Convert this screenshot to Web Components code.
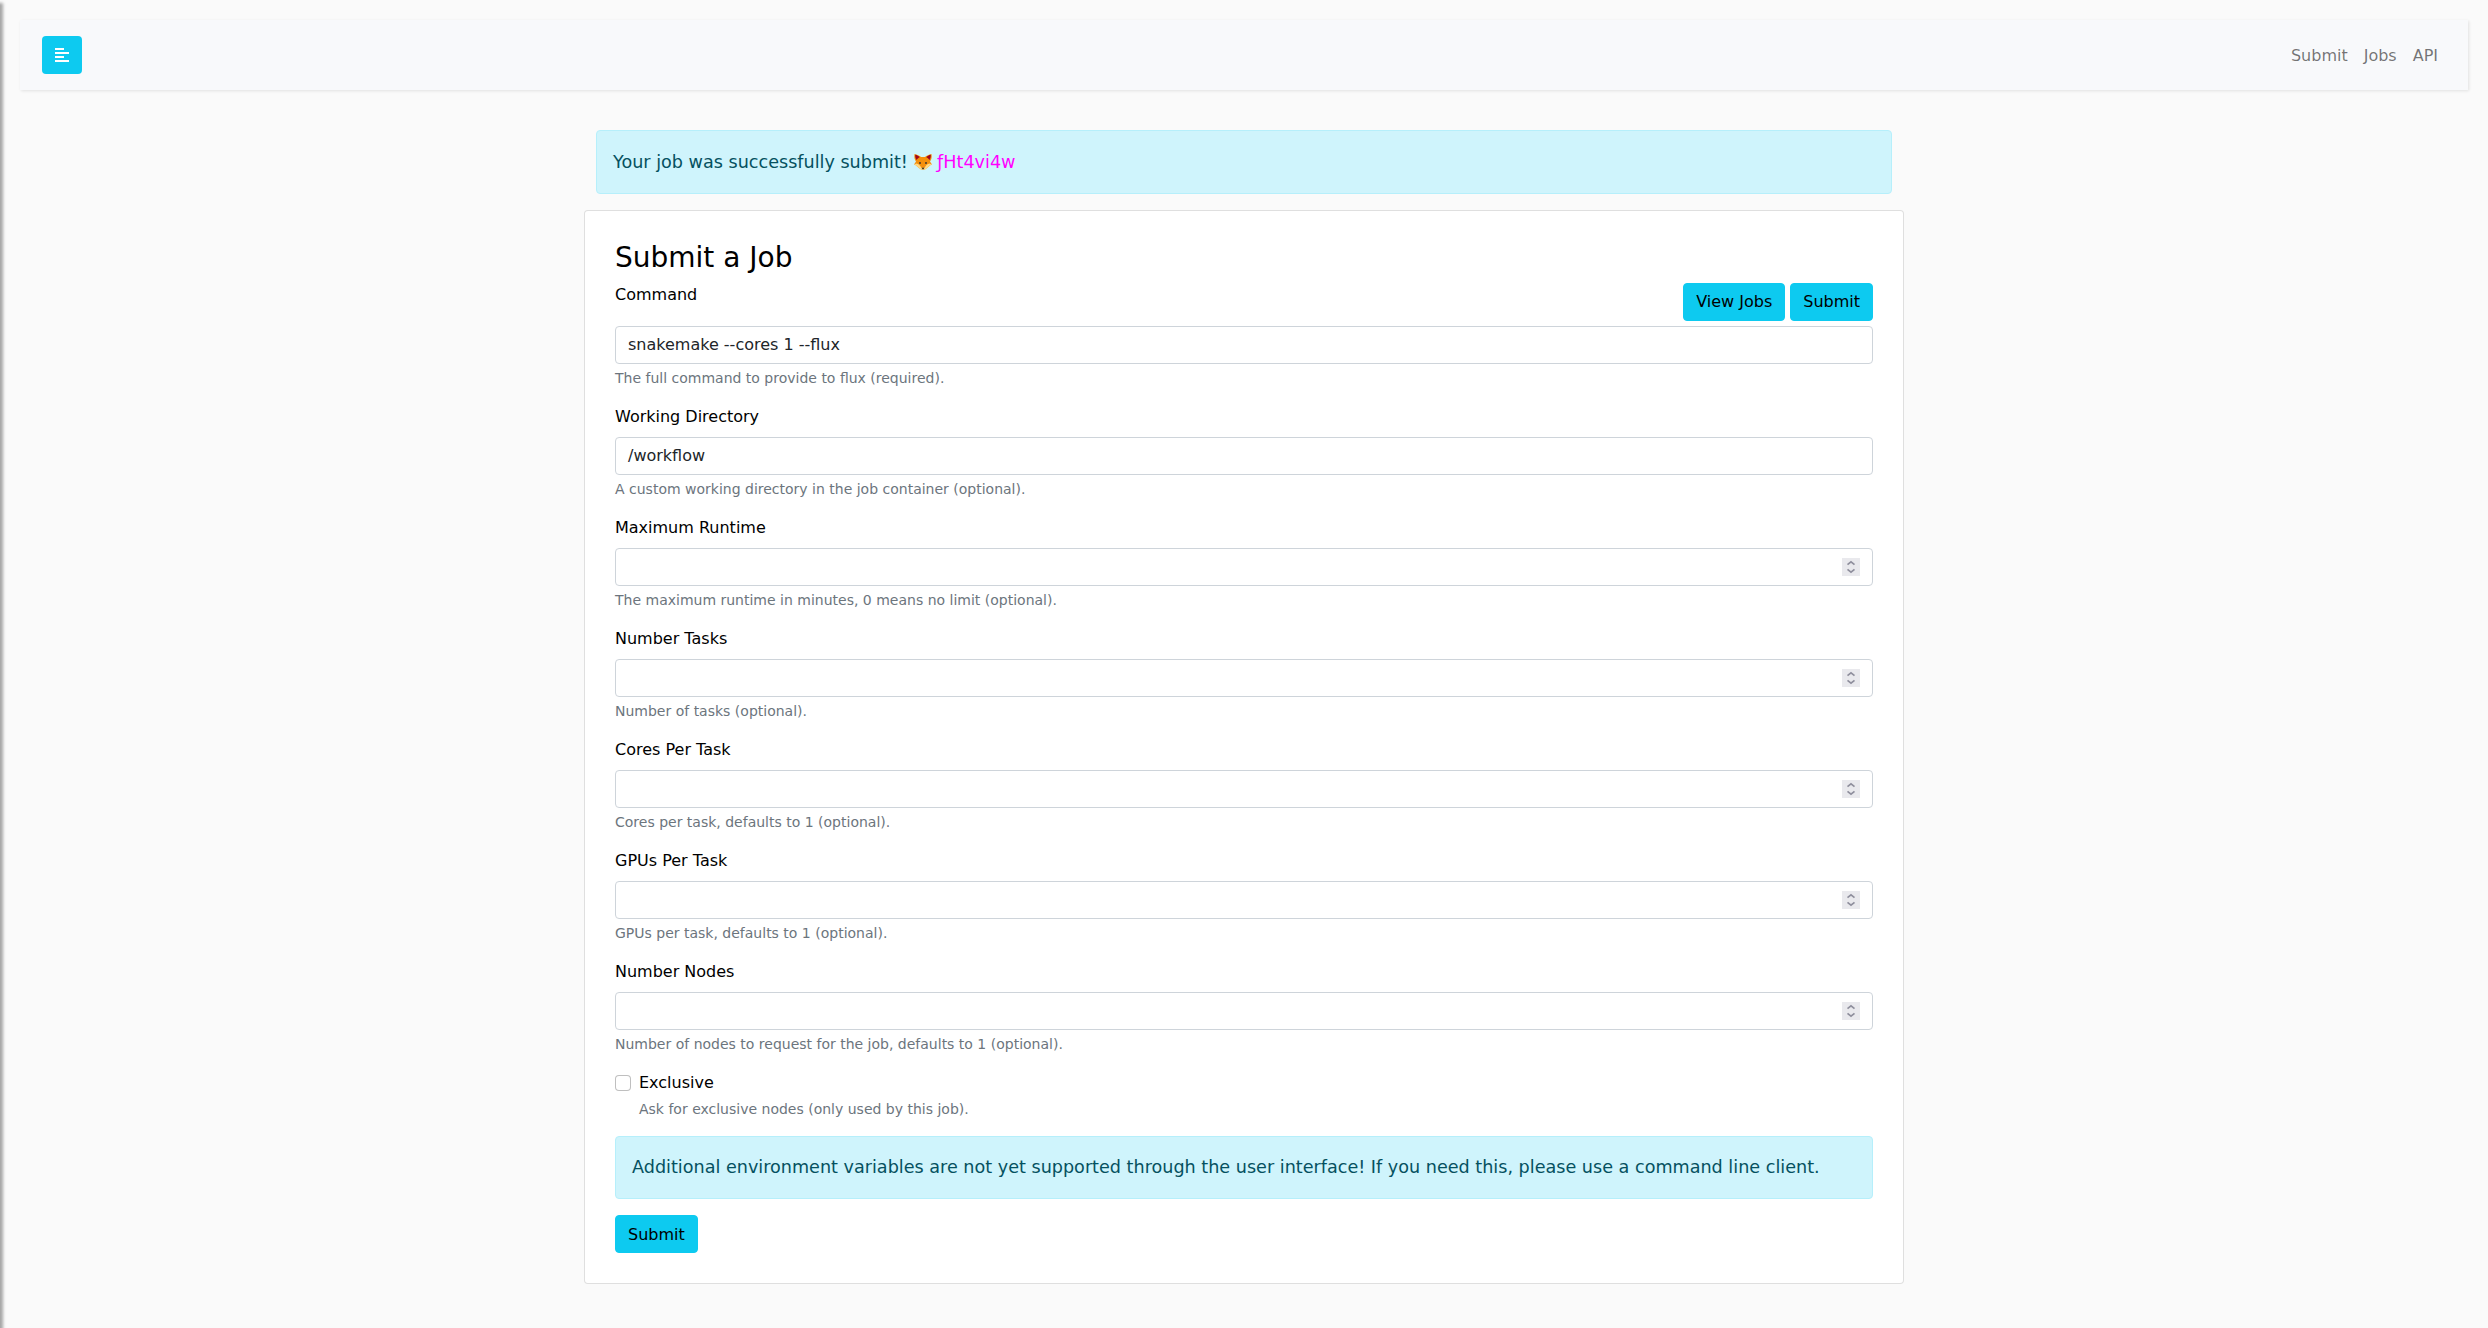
<!DOCTYPE html>
<html lang="en">
<head>
<meta charset="utf-8">
<title>Submit a Job</title>
<style>
body{margin:0;background:#fafafa;font:16px/1.5 "DejaVu Sans",sans-serif;color:#000;height:1328px;overflow:hidden}
</style>
</head>
<body>
<job-app></job-app>
<script>
const define=(name,html,setup)=>customElements.define(name,class extends HTMLElement{
  connectedCallback(){
    if(this.shadowRoot)return;
    const t=document.createElement('template');
    t.innerHTML='<style>*{box-sizing:border-box}</style>'+html;
    this.attachShadow({mode:'open'}).append(t.content.cloneNode(true));
    if(setup)setup(this,this.shadowRoot);
  }
});

define('ui-button',`<style>
:host{display:block}
button{display:block;font:inherit;line-height:24px;color:#000;background:#0dcaf0;border:1px solid #0dcaf0;border-radius:4px;padding:var(--pad,6px 12px);margin:0}
</style><button type="button"><slot></slot></button>`);

define('ui-alert',`<style>
:host{display:block;box-sizing:border-box;border:1px solid #b6effb;border-radius:4px;background:#cff4fc;color:#055160;padding:var(--pad,16px)}
p{margin:0;font-size:17.6px;line-height:1.7em;white-space:nowrap}
</style><p><slot></slot></p>`);

define('fox-icon',`<style>
:host{display:inline-block;width:18px;height:16px;vertical-align:-2px}
svg{display:block;width:100%;height:100%}
</style><svg viewBox="0 0 36 32" aria-hidden="true">
<path fill="#f4900c" d="M1 0C6 1 11 3 14 6H22C25 3 30 1 35 0C36 6 35 11 32 15L36 21C32 22 30 25 27 27C24 30 21 32 18 32C15 32 12 30 9 27C6 25 4 22 0 21L4 15C1 11 0 6 1 0Z"/>
<path fill="#a0041e" d="M2.500 1.500C6 2 9 4 11.500 6.500C8.500 8 6.500 10 5 12C3 9 2 5 2.500 1.500ZM33.500 1.500C30 2 27 4 24.500 6.500C27.500 8 29.500 10 31 12C33 9 34 5 33.500 1.500Z"/>
<path fill="#ffd983" d="M0 21L5 19C9 20 12 22 14.500 27L18 29L21.500 27C24 22 27 20 31 19L36 21C32 22 30 25 27 27C24 30 21 32 18 32C15 32 12 30 9 27C6 25 4 22 0 21Z"/>
<circle cx="12" cy="18" r="1.800" fill="#292f33"/><circle cx="24" cy="18" r="1.800" fill="#292f33"/>
<path fill="#292f33" d="M15 27.500H21L18 31.500Z"/></svg>`);

define('top-nav',`<style>
:host{display:block}
nav{display:flex;align-items:center;justify-content:space-between;height:70px;padding:0 22px;background:#f8f9fb;box-shadow:1px 1px 3px rgba(0,0,0,.1)}
.toggle{display:flex;align-items:center;justify-content:center;width:40px;height:38px;border:0;border-radius:4px;padding:0;background:#0dcaf0}
svg{display:block}
.links{display:flex}
a{padding:9px 8px 7px;color:rgba(0,0,0,.55);text-decoration:none}
</style><nav><button class="toggle" aria-label="Menu"><svg width="14" height="14" fill="#fff"><path d="M0 0h9v2H0zM0 4h14v2H0zM0 8h9v2H0zM0 12h14v2H0z"/></svg></button>
<div class="links"><a>Submit</a><a>Jobs</a><a>API</a></div></nav>`);

define('form-field',`<style>
:host{display:block;margin-bottom:16px}
.head{display:flex;justify-content:space-between;align-items:flex-start}
label{display:block;margin-bottom:8px}
.box{display:flex;align-items:center;justify-content:space-between;height:38px;border:1px solid #ced4da;border-radius:4px;background:#fff;padding:0 12px;color:#212529}
.spin{display:none;width:18px;height:18px;background:#e9e9ed}
:host([number]) .spin{display:block}
small{display:block;margin-top:4px;font-size:14px;line-height:21px;color:#6c757d}
</style><div class="head"><label></label><slot></slot></div>
<div class="box"><span class="value"></span><svg class="spin" viewBox="0 0 18 18" fill="none" stroke="#8f8f9d" stroke-width="1.7"><path d="M5.500 6.700 9 3.900l3.500 2.800M5.500 11.300 9 14.100l3.500-2.800"/></svg></div><small></small>`,
(el,r)=>{r.querySelector('label').textContent=el.getAttribute('label');
r.querySelector('.value').textContent=el.getAttribute('value')||'';
r.querySelector('small').textContent=el.getAttribute('help');});

define('check-field',`<style>
:host{display:flex;gap:8px;margin-bottom:16px}
i{display:block;width:16px;height:16px;margin-top:4px;border:1px solid rgba(0,0,0,.25);border-radius:4px;background:#fff}
small{display:block;margin-top:4px;font-size:14px;line-height:21px;color:#6c757d}
</style><i></i><div><div><slot></slot></div><small><slot name="help"></slot></small></div>`);

define('job-card',`<style>
:host{display:block;box-sizing:border-box;background:#fff;border:1px solid rgba(0,0,0,.125);border-radius:4px;padding:30px}
h3{margin:0 0 8px;font-size:28px;font-weight:400;line-height:1.2}
.actions{display:flex;gap:5px;margin-bottom:5px}
ui-alert{margin-bottom:16px}
.foot{display:flex;--pad:7px 12px 5px}
</style><h3>Submit a Job</h3>
<form-field label="Command" value="snakemake --cores 1 --flux" help="The full command to provide to flux (required)."><div class="actions"><ui-button>View Jobs</ui-button><ui-button>Submit</ui-button></div></form-field>
<form-field label="Working Directory" value="/workflow" help="A custom working directory in the job container (optional)."></form-field>
<form-field number label="Maximum Runtime" help="The maximum runtime in minutes, 0 means no limit (optional)."></form-field>
<form-field number label="Number Tasks" help="Number of tasks (optional)."></form-field>
<form-field number label="Cores Per Task" help="Cores per task, defaults to 1 (optional)."></form-field>
<form-field number label="GPUs Per Task" help="GPUs per task, defaults to 1 (optional)."></form-field>
<form-field number label="Number Nodes" help="Number of nodes to request for the job, defaults to 1 (optional)."></form-field>
<check-field>Exclusive<span slot="help">Ask for exclusive nodes (only used by this job).</span></check-field>
<ui-alert>Additional environment variables are not yet supported through the user interface! If you need this, please use a command line client.</ui-alert>
<div class="foot"><ui-button>Submit</ui-button></div>`);

define('side-drawer',`<style>
:host{display:block;position:absolute;left:-250px;top:0;width:250px;height:1400px;background:#fff;box-shadow:3px 3px 3px rgba(0,0,0,.34)}
</style>`);

define('job-app',`<style>
:host{display:block;padding:20px}
main{width:1320px;margin:40px auto 0}
.note{margin:0 12px 16px;--pad:17px 16px 15px}
.id{color:#f0f}
</style><side-drawer></side-drawer><top-nav></top-nav>
<main><ui-alert class="note">Your job was successfully submit! <fox-icon></fox-icon> <span class="id">ƒHt4vi4w</span></ui-alert><job-card></job-card></main>`);
</script>
</body>
</html>
